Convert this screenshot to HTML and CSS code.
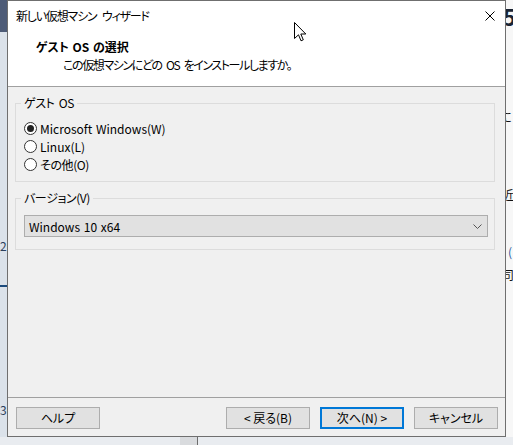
FILE: index.html
```html
<!DOCTYPE html>
<html lang="ja">
<head>
<meta charset="utf-8">
<title>新しい仮想マシン ウィザード</title>
<link rel="stylesheet" href="styles.css">
</head>
<body>
<div class="desktop">
  <div class="bg-left">
    <div class="bg-left-top"></div>
    <span class="frag frag-20">20</span>
    <div class="bg-left-line"></div>
    <span class="frag frag-30">30</span>
    <span class="frag frag-10">10</span>
  </div>
  <div class="bg-right">
    <span class="rfrag rf-5">5</span>
    <span class="rfrag rf-ni">に</span>
    <span class="rfrag rf-chika">近</span>
    <span class="rfrag rf-paren">(</span>
    <span class="rfrag rf-tsukasa">司</span>
  </div>
  <div class="bg-bottom">
    <div class="bg-bottom-shade"></div>
  </div>

  <div class="dialog">
    <div class="titlebar">
      <span class="title">新しい仮想マシン ウィザード</span>
      <svg class="close" width="10" height="10" viewBox="0 0 10 10"><path d="M0.5 0.5L9.5 9.5M9.5 0.5L0.5 9.5" stroke="#000" stroke-width="1"/></svg>
    </div>
    <div class="header">
      <div class="h-title">ゲスト OS の選択</div>
      <div class="h-sub">この仮想マシンにどの OS をインストールしますか。</div>
    </div>
    <div class="body">
      <fieldset class="group group-os">
        <legend>ゲスト OS</legend>
        <div class="radio-row"><span class="radio checked"></span><span class="lat">Microsoft Windows(W)</span></div>
        <div class="radio-row"><span class="radio"></span><span>Linux(L)</span></div>
        <div class="radio-row"><span class="radio"></span><span class="jp">その他(O)</span></div>
      </fieldset>
      <fieldset class="group group-ver">
        <legend>バージョン(V)</legend>
        <div class="select">
          <span class="lat">Windows 10 x64</span>
          <svg width="9" height="5" viewBox="0 0 9 5"><path d="M0.5 0.5L4.5 4.5L8.5 0.5" fill="none" stroke="#555" stroke-width="1"/></svg>
        </div>
      </fieldset>
    </div>
    <div class="footer">
      <div class="btn">ヘルプ</div>
      <div class="spacer"></div>
      <div class="btn">&lt; 戻る(B)</div>
      <div class="btn default">次へ(N) &gt;</div>
      <div class="btn">キャンセル</div>
    </div>
  </div>

  <svg class="cursor" width="13" height="20" viewBox="0 0 13 20"><path d="M0.5 0.5L0.5 16.5L4.5 12.8L7 18.8L9.3 17.8L6.8 12L11.8 12Z" fill="#fff" stroke="#000" stroke-width="1" stroke-linejoin="miter"/></svg>
</div>
</body>
</html>
```
FILE: styles.css
```css
* { box-sizing: border-box; }
html, body { margin: 0; padding: 0; }
body {
  font-family: "Noto Sans CJK JP", "Liberation Sans", sans-serif;
  font-size: 12px;
  color: #000;
  width: 513px;
  height: 445px;
  overflow: hidden;
}
.desktop {
  position: relative;
  width: 513px;
  height: 445px;
  background: #f4f4f4;
  overflow: hidden;
}

/* background windows */
.bg-left {
  position: absolute;
  left: 0; top: 0;
  width: 8px; height: 445px;
  background: #dbe2ea;
}
.bg-left-top { height: 32px; background: #4d5b77; }
.bg-left-line {
  position: absolute; left: 0; top: 285px;
  width: 8px; height: 2px; background: #1b4a7c;
}
.frag {
  position: absolute; left: 0;
  font-size: 12px; line-height: 14px; color: #2b3f5c;
}
.frag-20 { top: 239px; }
.frag-30 { top: 403px; }
.frag-10 { top: 434px; }

.bg-right {
  position: absolute;
  left: 505px; top: 0;
  width: 8px; height: 445px;
  background: #f7f7f7;
  border-left: 1px solid #7a7a7a;
}
.rfrag {
  position: absolute; left: 0;
  font-size: 12px; line-height: 14px; color: #111;
}
.rf-5 { top: 4px; font-size: 22px; line-height: 24px; font-weight: bold; color: #1a2433; left: -3px; }
.rf-ni { top: 110px; left: -6px; }
.rf-chika { top: 188px; left: -4px; }
.rf-paren { top: 245px; left: 2px; color: #2a5aa0; }
.rf-tsukasa { top: 268px; left: -4px; }

.bg-bottom {
  position: absolute;
  left: 0; top: 437px;
  width: 513px; height: 8px;
  background: #e9ecf0;
}
.bg-bottom-shade {
  position: absolute; left: 180px; top: 0;
  width: 18px; height: 8px;
  background: #d9dbde;
  border-right: 1px solid #6c6c6c;
}

/* dialog window */
.dialog {
  position: absolute;
  left: 7px; top: 0;
  width: 499px; height: 437px;
  border: 1px solid #6f6f6f;
  background: #f0f0f0;
  display: flex;
  flex-direction: column;
}
.titlebar {
  height: 29px;
  background: #fff;
  display: flex;
  align-items: center;
  padding: 0 10px 0 8px;
}
.title {
  flex: 1;
  font-feature-settings: "palt";
  letter-spacing: -1.2px;
  word-spacing: 4px;
  line-height: 16px;
}
.close { display: block; margin-top: 1px; }

.header {
  height: 57px;
  background: #fff;
  border-bottom: 1px solid #a0a0a0;
  padding: 9px 0 0 28px;
}
.h-title {
  font-weight: bold;
  line-height: 16px;
  font-feature-settings: "palt";
  word-spacing: 1px;
}
.h-sub {
  line-height: 16px;
  margin-top: 2px;
  padding-left: 27px;
  font-feature-settings: "palt";
  letter-spacing: -1.4px;
  word-spacing: 3px;
}

.body {
  flex: 1;
  padding: 8px 10px 0 7px;
  display: flex;
  flex-direction: column;
  gap: 8px;
}
.group {
  margin: 0;
  border: 1px solid #dcdcdc;
  padding: 8px 6px 8px 8px;
  min-width: 0;
}
.group legend {
  padding: 0 3px;
  margin-left: -3px;
  line-height: 16px;
  font-feature-settings: "palt";
  letter-spacing: -0.4px;
  word-spacing: 2px;
}
.group-ver { padding-top: 9px; padding-bottom: 12px; }
.jp { font-feature-settings: "palt"; letter-spacing: -0.4px; }
.lat { word-spacing: 1px; }

.radio-row {
  height: 18px;
  display: flex;
  align-items: center;
  gap: 3px;
}
.radio {
  width: 13px; height: 13px;
  border: 1px solid #333;
  border-radius: 50%;
  background: #fff;
  display: flex;
  align-items: center;
  justify-content: center;
}
.radio.checked::after {
  content: "";
  width: 7px; height: 7px;
  border-radius: 50%;
  background: #222;
}

.select {
  height: 22px;
  background: #e1e1e1;
  border: 1px solid #adadad;
  display: flex;
  align-items: center;
  justify-content: space-between;
  padding: 0 4px 0 4px;
}
.select svg { display: block; margin-right: 1px; }

.footer {
  height: 39px;
  border-top: 1px solid #a0a0a0;
  display: flex;
  align-items: flex-start;
  padding: 9px 7px 0 8px;
  gap: 10px;
}
.spacer { flex: 1; }
.btn {
  width: 84px;
  height: 22px;
  background: #e1e1e1;
  border: 1px solid #adadad;
  display: flex;
  align-items: center;
  justify-content: center;
  line-height: 16px;
  font-feature-settings: "palt";
}
.btn.default { border: 2px solid #0078d7; }

.cursor {
  position: absolute;
  left: 294px; top: 22px;
}
```
